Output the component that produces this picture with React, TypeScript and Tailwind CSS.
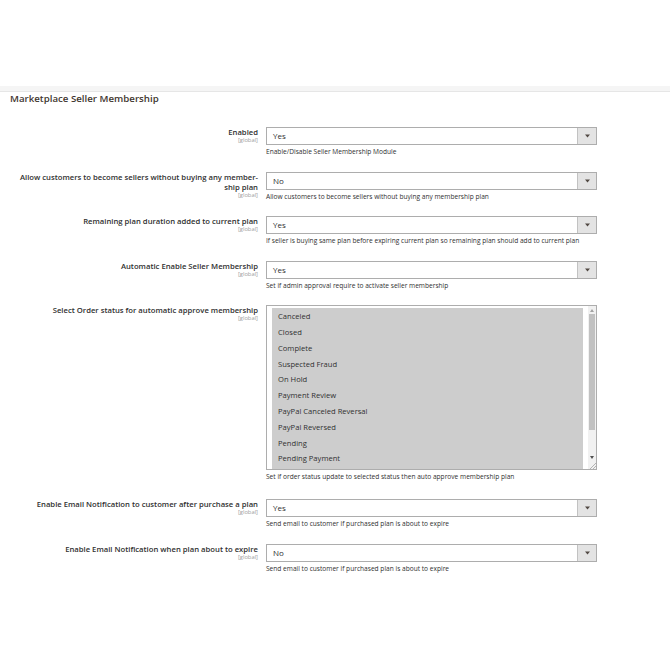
import React from "react";

const Arrow = () => (
  <div className="w-[19px] h-full bg-[#e3e3e3] border-l border-[#c2c2c2] flex items-center justify-center">
    <svg width="5" height="4" viewBox="0 0 5 4">
      <path d="M0 0.5 L5 0.5 L2.5 3.5 Z" fill="#514943" />
    </svg>
  </div>
);

function Label({ lines }: { lines: string[] }) {
  return (
    <div className="w-[258px] shrink-0 text-right pl-[4px]">
      {lines.map((l, i) => (
        <div key={i} className="text-[7.7px] leading-[10px] font-semibold text-[#303030] whitespace-nowrap">
          {l}
        </div>
      ))}
      <div className="text-[5.8px] leading-[7px] text-[#a0a0a0]">[global]</div>
    </div>
  );
}

function SelectRow({ lines, value, note }: { lines: string[]; value: string; note: string }) {
  return (
    <div className="flex mb-[14.5px]">
      <Label lines={lines} />
      <div className="ml-[8px] w-[331px]">
        <div className="h-[18px] border border-[#adadad] bg-white flex items-stretch">
          <div className="flex-1 pl-[6px] flex items-center text-[8px] text-[#303030]">{value}</div>
          <Arrow />
        </div>
        <div className="mt-[2px] text-[6.6px] leading-[10px] text-[#303030] whitespace-nowrap">{note}</div>
      </div>
    </div>
  );
}

const options = [
  "Canceled",
  "Closed",
  "Complete",
  "Suspected Fraud",
  "On Hold",
  "Payment Review",
  "PayPal Canceled Reversal",
  "PayPal Reversed",
  "Pending",
  "Pending Payment",
];

export default function App() {
  return (
    <div className="w-[670px] h-[670px] bg-white overflow-hidden font-['Open_Sans',sans-serif]">
      <div className="h-[86px]" />
      <div className="h-[6px] bg-[#f5f5f5] border-b border-[#e6e6e6]" />
      <h2 className="ml-[10px] mt-[0px] text-[9.7px] leading-[13px] font-semibold text-[#41362f]">
        Marketplace Seller Membership
      </h2>
      <div className="mt-[22px]">
        <SelectRow lines={["Enabled"]} value="Yes" note="Enable/Disable Seller Membership Module" />
        <SelectRow
          lines={["Allow customers to become sellers without buying any member-", "ship plan"]}
          value="No"
          note="Allow customers to become sellers without buying any membership plan"
        />
        <SelectRow
          lines={["Remaining plan duration added to current plan"]}
          value="Yes"
          note="If seller is buying same plan before expiring current plan so remaining plan should add to current plan"
        />
        <SelectRow
          lines={["Automatic Enable Seller Membership"]}
          value="Yes"
          note="Set if admin approval require to activate seller membership"
        />
        <div className="flex mb-[17px]">
          <Label lines={["Select Order status for automatic approve membership"]} />
          <div className="ml-[8px] w-[331px]">
            <div className="h-[165px] border border-[#adadad] bg-white flex">
              <div className="flex-1 pl-[5px] pt-[2px] pr-[5px] flex flex-col">
                <div className="bg-[#cdcdcd] flex-1 pt-[1px]">
                  {options.map((o) => (
                    <div key={o} className="h-[15.8px] pl-[6px] flex items-center text-[7.6px] text-[#303030]">
                      {o}
                    </div>
                  ))}
                </div>
              </div>
              <div className="w-[8px] bg-[#f1f1f1] flex flex-col items-center">
                <div className="h-[8px] flex items-center justify-center">
                  <svg width="4" height="3" viewBox="0 0 4 3">
                    <path d="M0 3 L4 3 L2 0 Z" fill="#a3a3a3" />
                  </svg>
                </div>
                <div className="w-[6px] h-[116px] bg-[#c1c1c1]" />
                <div className="flex-1" />
                <div className="h-[8px] flex items-center justify-center">
                  <svg width="4" height="3" viewBox="0 0 4 3">
                    <path d="M0 0 L4 0 L2 3 Z" fill="#505050" />
                  </svg>
                </div>
                <div className="h-[8px] w-full flex items-end justify-end">
                  <svg width="7" height="7" viewBox="0 0 7 7">
                    <path d="M1 7 L7 1 M4 7 L7 4" stroke="#9a9a9a" strokeWidth="0.7" />
                  </svg>
                </div>
              </div>
            </div>
            <div className="mt-[2px] text-[6.6px] leading-[10px] text-[#303030] whitespace-nowrap">
              Set if order status update to selected status then auto approve membership plan
            </div>
          </div>
        </div>
        <SelectRow
          lines={["Enable Email Notification to customer after purchase a plan"]}
          value="Yes"
          note="Send email to customer if purchased plan is about to expire"
        />
        <SelectRow
          lines={["Enable Email Notification when plan about to expire"]}
          value="No"
          note="Send email to customer if purchased plan is about to expire"
        />
      </div>
    </div>
  );
}
